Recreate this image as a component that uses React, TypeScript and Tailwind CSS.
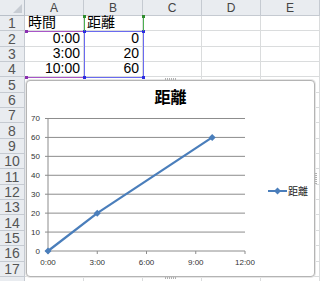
import React from "react";

const cols = ["A", "B", "C", "D", "E"];
const rows = Array.from({ length: 18 }, (_, i) => i + 1);
const data: Record<number, [string, string]> = {
  1: ["時間", "距離"],
  2: ["0:00", "0"],
  3: ["3:00", "20"],
  4: ["10:00", "60"],
};

// chart plot area (inside chart box)
const px0 = 22;
const pxW = 197;
const py0 = 171;
const step = 18.93;
const xAt = (h: number) => px0 + (h / 12) * pxW;
const yAt = (v: number) => py0 - (v / 10) * step;
const points: [number, number][] = [
  [0, 0],
  [3, 20],
  [10, 60],
];

function Diamond({ x, y }: { x: number; y: number }) {
  return (
    <polygon
      points={`${x},${y - 3.5} ${x + 3.5},${y} ${x},${y + 3.5} ${x - 3.5},${y}`}
      fill="#4a7ebb"
    />
  );
}

function Chart() {
  return (
    <div className="absolute left-[26px] top-[80px] w-[289px] h-[197px] rounded-[4px] border border-[#b4b4b4] bg-white shadow-[0_0_0_1px_#e6e6e6]">
      <div
        className="text-center pt-[6px] text-[16px] font-bold leading-[18px] text-black"
        style={{ fontFamily: '"Noto Sans CJK JP", sans-serif' }}
      >
        距離
      </div>
      <svg className="absolute left-[-1px] top-[-1px] overflow-visible" width="289" height="197">
        {[0, 10, 20, 30, 40, 50, 60, 70].map((v) => (
          <g key={v}>
            <line x1={px0 - 3} x2={px0 + pxW} y1={yAt(v)} y2={yAt(v)} stroke="#8c8c8c" strokeWidth="1" />
            <text
              x={px0 - 8}
              y={yAt(v) + 3}
              textAnchor="end"
              fontSize="8"
              fill="#333"
              fontFamily="Liberation Sans, sans-serif"
            >
              {v}
            </text>
          </g>
        ))}
        <line x1={px0} x2={px0} y1={yAt(70)} y2={py0} stroke="#8c8c8c" strokeWidth="1" />
        {[0, 3, 6, 9, 12].map((h) => (
          <g key={h}>
            <line x1={xAt(h)} x2={xAt(h)} y1={py0} y2={py0 + 3} stroke="#8c8c8c" strokeWidth="1" />
            <text
              x={xAt(h)}
              y={py0 + 14}
              textAnchor="middle"
              fontSize="8"
              fill="#333"
              fontFamily="Liberation Sans, sans-serif"
            >
              {h}:00
            </text>
          </g>
        ))}
        <polyline
          points={points.map(([h, v]) => `${xAt(h)},${yAt(v)}`).join(" ")}
          fill="none"
          stroke="#4a7ebb"
          strokeWidth="2.25"
          strokeLinejoin="round"
        />
        {points.map(([h, v]) => (
          <Diamond key={h} x={xAt(h)} y={yAt(v)} />
        ))}
        {/* legend */}
        <line x1="242" x2="261" y1="111" y2="111" stroke="#4a7ebb" strokeWidth="2" />
        <Diamond x={251.5} y={111} />
        <text x="262" y="115" fontSize="10" fill="#222" fontFamily="Noto Sans CJK JP, sans-serif">
          距離
        </text>
        {/* resize handles */}
        <line x1="139" x2="150" y1="-1" y2="-1" stroke="#b0b0b0" strokeWidth="2" strokeDasharray="1 1" />
        <line x1="139" x2="150" y1="198" y2="198" stroke="#b0b0b0" strokeWidth="2" strokeDasharray="1 1" />
        <line x1="290" x2="290" y1="93" y2="104" stroke="#b0b0b0" strokeWidth="2" strokeDasharray="1 1" />
      </svg>
    </div>
  );
}

function RangeMarks() {
  // coloured range outlines Excel draws around the chart's source data
  return (
    <svg className="absolute left-0 top-0 pointer-events-none" width="160" height="90">
      <line x1="25" x2="84" y1="31.5" y2="31.5" stroke="#a855c8" />
      <line x1="25" x2="84" y1="77.5" y2="77.5" stroke="#a855c8" />
      <rect x="25" y="30" width="3" height="3" fill="#8b2fb0" />
      <rect x="25" y="76" width="3" height="3" fill="#8b2fb0" />
      <rect x="84.5" y="31.5" width="59" height="46" fill="none" stroke="#6a6af0" />
      {[
        [83, 30],
        [142, 30],
        [83, 76],
        [142, 76],
      ].map(([x, y]) => (
        <rect key={`${x}-${y}`} x={x} y={y} width="3" height="3" fill="#2c2ce0" />
      ))}
      <line x1="84.5" x2="84.5" y1="16" y2="31" stroke="#4caf50" />
      <line x1="143.5" x2="143.5" y1="16" y2="31" stroke="#4caf50" />
      <rect x="83" y="15" width="3" height="3" fill="#2e8b2e" />
      <rect x="142" y="15" width="3" height="3" fill="#2e8b2e" />
    </svg>
  );
}

export default function App() {
  return (
    <div
      className="relative w-[320px] h-[281px] overflow-hidden bg-white"
      style={{ fontFamily: '"Liberation Sans", "Noto Sans CJK JP", sans-serif' }}
    >
      <div className="grid grid-cols-[25px_59px_59px_59px_59px_59px] grid-rows-[16px_repeat(18,15.35px)]">
        <div className="relative bg-[#e9ecf0] border-r border-b border-[#b9c0c9]">
          <svg className="absolute right-[2px] bottom-[2px]" width="9" height="9">
            <polygon points="9,0 9,9 0,9" fill="#c7ccd3" />
          </svg>
        </div>
        {cols.map((c) => (
          <div
            key={c}
            className="flex items-center justify-center bg-[#e9ecf0] border-r border-b border-[#c5cad1] text-[12px] leading-none text-[#444]"
          >
            {c}
          </div>
        ))}
        {rows.map((r) => (
          <React.Fragment key={r}>
            <div className="flex items-center justify-center bg-[#e9ecf0] border-r border-b border-[#c5cad1] text-[14px] leading-none text-[#555]">
              {r < 18 ? r : ""}
            </div>
            {cols.map((c, ci) => {
              const val = data[r]?.[ci];
              const left = r === 1;
              return (
                <div
                  key={c}
                  className={`flex items-end border-r border-b border-[#dadcdd] text-[14px] leading-[15px] text-black ${
                    left ? "justify-start pl-[3px]" : "justify-end pr-[3px]"
                  }`}
                >
                  {val}
                </div>
              );
            })}
          </React.Fragment>
        ))}
      </div>

      <RangeMarks />
      <Chart />
    </div>
  );
}
